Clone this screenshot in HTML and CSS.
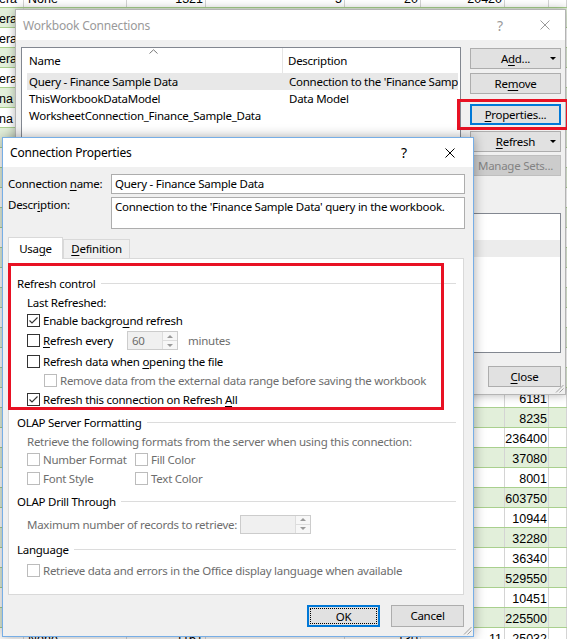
FILE: index.html
```html
<!DOCTYPE html>
<html lang="en">
<head>
    <meta charset="UTF-8">
    <meta name="viewport" content="width=device-width, initial-scale=1.0">
    <title>Connection Properties</title>
    <link rel="stylesheet" href="styles.css">
</head>
<body>

<!-- worksheet behind the dialogs -->
<div class="sheet">
    <div class="row"><div class="c c1">era</div><div class="c c2">None</div><div class="c c3 num">1321</div><div class="c c4 num">5</div><div class="c c5 num">20</div><div class="c c6 num">20420</div><div class="c c7"></div><div class="c c8"></div></div>
    <div class="row g"><div class="c c1">era</div></div>
    <div class="row"><div class="c c1">era</div></div>
    <div class="row g"><div class="c c1">era</div></div>
    <div class="row"><div class="c c1">era</div></div>
    <div class="row g"><div class="c c1">na</div></div>
    <div class="row"><div class="c c1">na</div></div>
    <div class="row g"></div>
    <div class="row"></div>
    <div class="row g"></div>
    <div class="row"></div>
    <div class="row g"></div>
    <div class="row"></div>
    <div class="row g"></div>
    <div class="row"></div>
    <div class="row g"></div>
    <div class="row"></div>
    <div class="row g"></div>
    <div class="row"></div>
    <div class="row g"></div>
    <div class="row"><div class="c lead"></div><div class="c c7 num">6181</div><div class="c c8"></div></div>
    <div class="row g"><div class="c lead"></div><div class="c c7 num">8235</div><div class="c c8"></div></div>
    <div class="row"><div class="c lead"></div><div class="c c7 num">236400</div><div class="c c8"></div></div>
    <div class="row g"><div class="c lead"></div><div class="c c7 num">37080</div><div class="c c8"></div></div>
    <div class="row"><div class="c lead"></div><div class="c c7 num">8001</div><div class="c c8"></div></div>
    <div class="row g"><div class="c lead"></div><div class="c c7 num">603750</div><div class="c c8"></div></div>
    <div class="row"><div class="c lead"></div><div class="c c7 num">10944</div><div class="c c8"></div></div>
    <div class="row g"><div class="c lead"></div><div class="c c7 num">32280</div><div class="c c8"></div></div>
    <div class="row"><div class="c lead"></div><div class="c c7 num">36340</div><div class="c c8"></div></div>
    <div class="row g"><div class="c lead"></div><div class="c c7 num">529550</div><div class="c c8"></div></div>
    <div class="row"><div class="c lead"></div><div class="c c7 num">10451</div><div class="c c8"></div></div>
    <div class="row g"><div class="c lead"></div><div class="c c7 num">225500</div><div class="c c8"></div></div>
    <div class="row"><div class="c c1"></div><div class="c c2">None</div><div class="c c3 num">1161</div><div class="c c4"></div><div class="c c5 num">130</div><div class="c c6 num">11</div><div class="c c7 num">25032</div><div class="c c8"></div></div>
</div>

<!-- Workbook Connections (inactive) -->
<div class="dlg wbc">
    <div class="titlebar inactive">
        <span class="title">Workbook Connections</span>
        <span class="tb-btn help">?</span>
        <span class="tb-btn close"><svg width="10" height="10" viewBox="0 0 10 10"><path d="M0.5 0.5L9.5 9.5M9.5 0.5L0.5 9.5" stroke="#9a9a9a" stroke-width="1"/></svg></span>
    </div>
    <div class="wbc-body">
        <div class="wbc-top">
            <div class="conn-list">
                <div class="list-head">
                    <div class="lh-name">Name<svg class="sort" width="9" height="5" viewBox="0 0 9 5"><path d="M0.5 4.5L4.5 0.8L8.5 4.5" fill="none" stroke="#777" stroke-width="1"/></svg></div>
                    <div class="lh-desc">Description</div>
                </div>
                <div class="list-row sel"><span class="ln">Query - Finance Sample Data</span><span class="ld">Connection to the 'Finance Samp</span></div>
                <div class="list-row"><span class="ln">ThisWorkbookDataModel</span><span class="ld">Data Model</span></div>
                <div class="list-row"><span class="ln">WorksheetConnection_Finance_Sample_Data</span><span class="ld"></span></div>
            </div>
            <div class="side">
                <button class="btn side-btn drop">A<u>d</u>d...<i class="caret"></i></button>
                <button class="btn side-btn b-remove">Re<u>m</u>ove</button>
                <div class="props-wrap">
                    <button class="btn side-btn focused"><u>P</u>roperties...</button>
                    <div class="hl hl-props"></div>
                </div>
                <button class="btn side-btn drop b-refresh"><u>R</u>efresh<i class="caret"></i></button>
                <button class="btn side-btn disabled b-manage">Manage Sets...</button>
            </div>
        </div>
        <div class="loc-list">
            <div class="loc-head"></div>
            <div class="loc-row sel"></div>
        </div>
        <div class="wbc-foot">
            <button class="btn b-close"><u>C</u>lose</button>
        </div>
    </div>
    <svg class="grip" width="9" height="9" viewBox="0 0 9 9"><path d="M8.5 1L1 8.5M8.5 4.5L4.5 8.5" stroke="#a0a0a0" stroke-width="1"/></svg>
</div>

<!-- Connection Properties (active) -->
<div class="dlg cp">
    <div class="titlebar">
        <span class="title">Connection Properties</span>
        <span class="tb-btn help">?</span>
        <span class="tb-btn close"><svg width="10" height="10" viewBox="0 0 10 10"><path d="M0.5 0.5L9.5 9.5M9.5 0.5L0.5 9.5" stroke="#000" stroke-width="1"/></svg></span>
    </div>
    <div class="cp-body">
        <div class="field">
            <label class="field-label">Connection <u>n</u>ame:</label>
            <div class="input">Query - Finance Sample Data</div>
        </div>
        <div class="field desc">
            <label class="field-label">Descr<u>i</u>ption:</label>
            <div class="input textarea">Connection to the 'Finance Sample Data' query in the workbook.</div>
        </div>

        <div class="tabs">
            <div class="tab active">Usa<u>g</u>e</div>
            <div class="tab"><u>D</u>efinition</div>
        </div>
        <div class="panel">
            <div class="hl hl-refresh"></div>

            <div class="sec-head"><span>Refresh control</span><i class="rule"></i></div>
            <div class="item last"><span>Last Refreshed:</span></div>
            <div class="item"><span class="cb"><svg width="11" height="11" viewBox="0 0 11 11"><path d="M1.5 5.5L4 8L9.5 2.5" fill="none" stroke="#333" stroke-width="1.1"/></svg></span><span>Enable backgro<u>u</u>nd refresh</span></div>
            <div class="item spin-row">
                <span class="cb"></span><span class="every"><u>R</u>efresh every</span>
                <span class="spin"><span class="spin-val">60</span><span class="spin-btns"><span><i class="up"></i></span><span><i class="down"></i></span></span></span>
                <span class="dim minutes">minutes</span>
            </div>
            <div class="item opening"><span class="cb"></span><span>Refresh data when <u>o</u>pening the file</span></div>
            <div class="item sub dim"><span class="cb off"></span><span>Remove data from the external data range before saving the workbook</span></div>
            <div class="item"><span class="cb"><svg width="11" height="11" viewBox="0 0 11 11"><path d="M1.5 5.5L4 8L9.5 2.5" fill="none" stroke="#333" stroke-width="1.1"/></svg></span><span>Refresh this connection on Refresh <u>A</u>ll</span></div>

            <div class="sec-head olap"><span>OLAP Server Formatting</span><i class="rule"></i></div>
            <div class="item dim formats"><span>Retrieve the following formats from the server when using this connection:</span></div>
            <div class="fmt-grid dim">
                <div class="item"><span class="cb off"></span><span>Number Format</span></div>
                <div class="item"><span class="cb off"></span><span>Fill Color</span></div>
                <div class="item"><span class="cb off"></span><span>Font Style</span></div>
                <div class="item"><span class="cb off"></span><span>Text Color</span></div>
            </div>

            <div class="sec-head drill"><span>OLAP Drill Through</span><i class="rule"></i></div>
            <div class="item spin-row dim maxrow">
                <span class="max-label">Maximum number of records to retrieve:</span>
                <span class="spin wide"><span class="spin-val"></span><span class="spin-btns"><span><i class="up"></i></span><span><i class="down"></i></span></span></span>
            </div>

            <div class="sec-head lang"><span>Language</span><i class="rule"></i></div>
            <div class="item dim langrow"><span class="cb off"></span><span>Retrieve data and errors in the Office display language when available</span></div>
        </div>

        <div class="cp-foot">
            <button class="btn b-ok"><span class="focus-ring">OK</span></button>
            <button class="btn b-cancel">Cancel</button>
        </div>
    </div>
    <svg class="grip" width="9" height="9" viewBox="0 0 9 9"><path d="M8.5 1L1 8.5M8.5 4.5L4.5 8.5" stroke="#a0a0a0" stroke-width="1"/></svg>
</div>

</body>
</html>
```

FILE: styles.css
```css
* {
    box-sizing: border-box;
}
body {
    margin: 0;
    width: 567px;
    height: 639px;
    overflow: hidden;
    position: relative;
    background: #fff;
    font-family: 'Noto Sans', 'Open Sans', sans-serif;
    font-size: 11.5px;
    letter-spacing: -0.26px;
    color: #000;
}
u {
    text-decoration-thickness: 1px;
    text-underline-offset: 2px;
}
button {
    font-family: inherit;
    font-size: inherit;
    letter-spacing: inherit;
    color: inherit;
}

/* worksheet */
.sheet {
    margin-top: -12px;
    font-family: 'Liberation Sans', Arial, sans-serif;
    font-size: 12.5px;
    letter-spacing: 0;
}
.row {
    display: flex;
    height: 20px;
    background: #fff;
    border-bottom: 1px solid #a9d08e;
}
.row.g {
    background: #e2efda;
}
.c {
    flex: none;
    height: 19px;
    padding: 2px 2px 0;
    line-height: 19px;
    overflow: hidden;
    white-space: nowrap;
    border-right: 1px solid #d4d4d4;
}
.num {
    text-align: right;
}
.c1 { width: 24px; padding-left: 0; text-indent: -1px; }
.c2 { width: 103px; padding-left: 4px; }
.c3 { width: 79px; }
.c4 { width: 139px; }
.c5 { width: 76px; }
.c6 { width: 84px; }
.c7 { width: 44px; padding-left: 0; padding-right: 1px; }
.c8 { flex: 1; }
.lead { width: 505px; }

/* dialogs */
.dlg {
    position: absolute;
    background: #f0f0f0;
}
.titlebar {
    display: flex;
    align-items: center;
    background: #fff;
    font-size: 12px;
    letter-spacing: -0.2px;
}
.titlebar .title {
    flex: 1;
}
.tb-btn {
    display: flex;
    align-items: center;
    justify-content: center;
    font-size: 14px;
}
.titlebar.inactive {
    color: #9a9a9a;
}
.grip {
    position: absolute;
    right: 1px;
    bottom: 1px;
}

/* Workbook Connections */
.wbc {
    left: 15px;
    top: 9px;
    width: 551px;
    height: 386px;
    border: 1px solid #b4b4b4;
    box-shadow: 0 0 9px rgba(0, 0, 0, 0.3);
}
.wbc .titlebar {
    height: 30px;
    padding-left: 7px;
}
.wbc .tb-btn {
    width: 40px;
}
.wbc .help {
    margin-right: 5px;
}
.wbc-body {
    padding: 7px 4px 0 5px;
}
.wbc-top {
    display: flex;
    gap: 9px;
}
.conn-list {
    width: 440px;
    height: 150px;
    background: #fff;
    border: 1px solid #828790;
}
.list-head {
    display: flex;
    height: 25px;
    line-height: 25px;
}
.lh-name {
    position: relative;
    width: 261px;
    padding-left: 7px;
    border-right: 1px solid #e5e5e5;
}
.sort {
    position: absolute;
    left: 127px;
    top: 1px;
}
.lh-desc {
    padding-left: 5px;
}
.list-row {
    display: flex;
    height: 17px;
    line-height: 17px;
    margin: 0 2px 0 5px;
    white-space: nowrap;
    overflow: hidden;
}
.list-row.sel {
    background: #e8e8e8;
}
.ln {
    flex: none;
    width: 256px;
    padding-left: 2px;
}
.ld {
    flex: 1;
    min-width: 0;
    overflow: hidden;
    padding-left: 6px;
}
.side {
    width: 91px;
    display: flex;
    flex-direction: column;
    padding-top: 1px;
}
.btn {
    position: relative;
    height: 21px;
    padding: 0;
    background: #e1e1e1;
    border: 1px solid #adadad;
    line-height: 18px;
}
.side-btn {
    width: 91px;
}
.caret {
    position: absolute;
    right: 4px;
    top: 8px;
    border-left: 3px solid transparent;
    border-right: 3px solid transparent;
    border-top: 3px solid #000;
}
.b-remove {
    margin-top: 4px;
}
.props-wrap {
    position: relative;
    margin-top: 10px;
}
.btn.focused {
    border: 2px solid #0078d7;
    line-height: 16px;
}
.hl {
    position: absolute;
    border: 3px solid #e81123;
}
.hl-props {
    left: -13px;
    top: -5px;
    width: 112px;
    height: 31px;
}
.b-refresh {
    margin-top: 6px;
}
.b-manage {
    margin-top: 3px;
}
.btn.disabled {
    background: #cccccc;
    border-color: #bfbfbf;
    color: #838383;
}
.loc-list {
    height: 140px;
    margin-top: 16px;
    background: #fff;
    border: 1px solid #828790;
}
.loc-head {
    height: 26px;
}
.loc-row {
    height: 17px;
}
.loc-row.sel {
    background: #ececec;
}
.wbc-foot {
    display: flex;
    justify-content: flex-end;
    margin-top: 13px;
}
.b-close {
    width: 73px;
}

/* Connection Properties */
.cp {
    left: 2px;
    top: 137px;
    width: 472px;
    height: 500px;
    border: 1px solid #77aee6;
    box-shadow: 0 0 11px rgba(0, 0, 0, 0.35);
}
.cp .titlebar {
    height: 29px;
    padding-left: 7px;
}
.cp .tb-btn {
    width: 46px;
}
.cp-body {
    padding: 7px 8px 0 5px;
}
.field {
    display: flex;
}
.field-label {
    width: 103px;
    line-height: 20px;
}
.input {
    flex: 1;
    height: 20px;
    padding-left: 3px;
    line-height: 18px;
    background: #fff;
    border: 1px solid #adadad;
    white-space: nowrap;
    overflow: hidden;
}
.field.desc {
    margin-top: 3px;
}
.field.desc .field-label {
    line-height: 15px;
}
.textarea {
    height: 32px;
    padding-top: 1px;
    line-height: 16px;
}
.tabs {
    display: flex;
    align-items: flex-end;
    height: 21px;
    margin-top: 8px;
}
.tab {
    height: 19px;
    width: 67px;
    line-height: 18px;
    text-align: center;
    border: 1px solid #d9d9d9;
    border-bottom: none;
}
.tab.active {
    width: 55px;
    height: 22px;
    line-height: 21px;
    background: #fff;
    margin-bottom: -1px;
    position: relative;
    z-index: 1;
}
.panel {
    position: relative;
    width: 456px;
    height: 337px;
    padding: 15px 7px 0 8px;
    background: #fff;
    border: 1px solid #d9d9d9;
}
.hl-refresh {
    left: -1px;
    top: 4px;
    width: 436px;
    height: 147px;
}
.sec-head {
    display: flex;
    align-items: center;
    gap: 5px;
    height: 19px;
}
.rule {
    flex: 1;
    height: 1px;
    background: #dcdcdc;
}
.item {
    display: flex;
    align-items: center;
    height: 19px;
    padding-left: 10px;
    white-space: nowrap;
}
.item.last {
    height: 18px;
}
.dim {
    color: #6d6d6d;
}
.cb {
    flex: none;
    width: 13px;
    height: 13px;
    margin-right: 3px;
    background: #fff;
    border: 1px solid #333;
}
.cb svg {
    display: block;
}
.cb.off {
    border-color: #bcbcbc;
}
.spin-row {
    height: 21px;
}
.every {
    width: 84px;
}
.spin {
    display: flex;
    width: 51px;
    height: 19px;
    background: #f0f0f0;
    border: 1px solid #cccccc;
}
.spin-val {
    flex: 1;
    padding-left: 4px;
    line-height: 17px;
    color: #6d6d6d;
}
.spin-btns {
    width: 15px;
    display: flex;
    flex-direction: column;
    background: #f7f7f7;
    border-left: 1px solid #dddddd;
}
.spin-btns span {
    flex: 1;
    display: flex;
    align-items: center;
    justify-content: center;
}
.spin-btns span + span {
    border-top: 1px solid #dddddd;
}
.up {
    border-left: 3px solid transparent;
    border-right: 3px solid transparent;
    border-bottom: 3px solid #9a9a9a;
}
.down {
    border-left: 3px solid transparent;
    border-right: 3px solid transparent;
    border-top: 3px solid #9a9a9a;
}
.minutes {
    margin-left: 10px;
}
.item.opening {
    margin-top: 1px;
}
.item.sub {
    padding-left: 27px;
}
.sec-head.olap {
    margin-top: 4px;
}
.item.formats {
    height: 17px;
    margin-top: 1px;
}
.fmt-grid {
    display: grid;
    grid-template-columns: 108px 1fr;
}
.sec-head.drill {
    margin-top: 4px;
}
.maxrow {
    height: 20px;
    margin-top: 3px;
}
.max-label {
    width: 213px;
}
.spin.wide {
    width: 71px;
}
.sec-head.lang {
    margin-top: 6px;
}
.langrow {
    margin-top: 2px;
}
.cp-foot {
    display: flex;
    justify-content: flex-end;
    gap: 11px;
    margin-top: 10px;
    padding-right: 1px;
}
.b-ok,
.b-cancel {
    width: 73px;
    height: 22px;
}
.b-ok {
    border: 2px solid #0078d7;
    padding: 1px;
}
.focus-ring {
    display: block;
    height: 16px;
    line-height: 15px;
    border: 1px dotted #000;
}
```
